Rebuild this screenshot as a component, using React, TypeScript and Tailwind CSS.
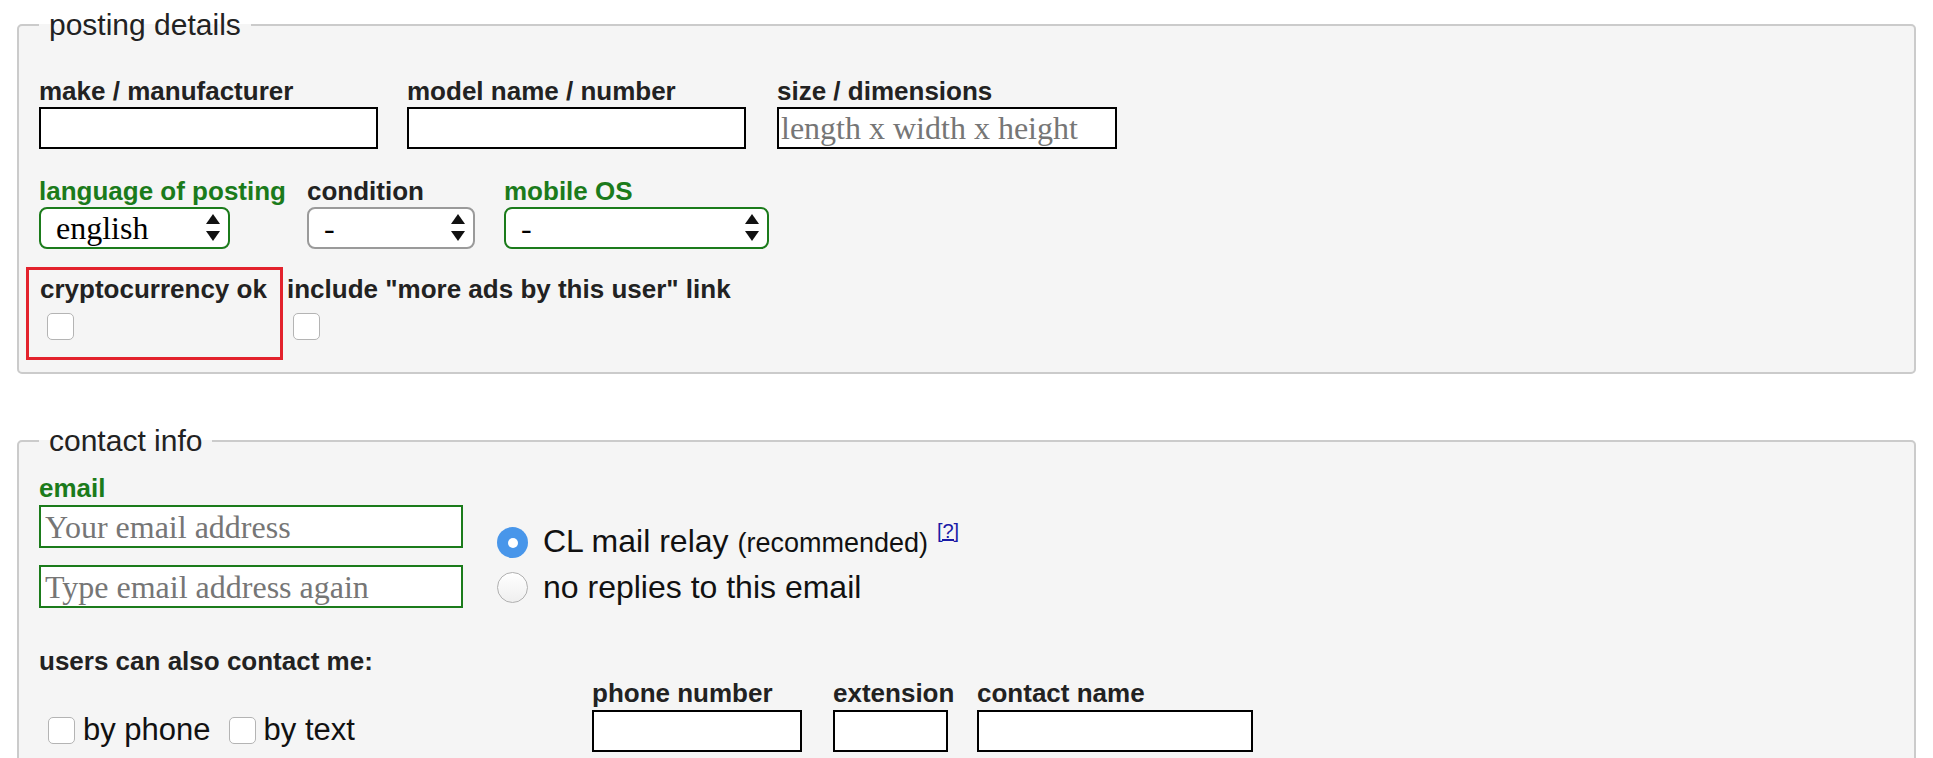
import React from 'react';

function FieldLabel({ children, green = false }: { children: React.ReactNode; green?: boolean }) {
  return (
    <div
      className={`whitespace-nowrap text-[26px] font-bold leading-[30px] ${
        green ? 'text-[#1b7b1b]' : 'text-[#222]'
      }`}
    >
      {children}
    </div>
  );
}

function TextBox({ width, placeholder, green = false }: { width: string; placeholder?: string; green?: boolean }) {
  return (
    <input
      type="text"
      placeholder={placeholder}
      className={`${width} h-[42px] border-2 bg-white px-[2px] font-['Liberation_Serif',serif] text-[32px] text-black outline-none placeholder:text-[#767676] ${
        green ? 'border-[#1b7b1b]' : 'border-black'
      }`}
    />
  );
}

function Arrows() {
  return (
    <svg width="14" height="28" viewBox="0 0 14 28" className="shrink-0">
      <polygon points="7,0 14,10 0,10" fill="#111" />
      <polygon points="0,17 14,17 7,27" fill="#111" />
    </svg>
  );
}

function FakeSelect({ width, value, green = true }: { width: string; value: string; green?: boolean }) {
  return (
    <div
      className={`${width} flex h-[42px] items-center justify-between rounded-[8px] border-2 bg-white pl-[15px] pr-[8px] ${
        green ? 'border-[#1b7b1b]' : 'border-[#9a9a9a]'
      }`}
    >
      <span className="font-['Liberation_Serif',serif] text-[32px] leading-none text-black">{value}</span>
      <Arrows />
    </div>
  );
}

function CheckBox() {
  return <span className="inline-block h-[27px] w-[27px] shrink-0 rounded-[5px] border border-[#b4b4b4] bg-white" />;
}

export default function App() {
  return (
    <div className="min-h-screen bg-white px-[17px] pt-[10px] pb-10 font-['Liberation_Sans',Arial,sans-serif] text-[#222]">
      <fieldset className="rounded-[5px] border-2 border-[#cbcbcb] bg-[#f5f5f5] px-[20px] pt-[36px] pb-[12px]">
        <legend className="px-[10px] text-[30px] leading-[30px] text-[#222]">posting details</legend>

        <div className="flex">
          <div className="flex flex-col">
            <FieldLabel>make / manufacturer</FieldLabel>
            <div className="mt-px">
              <TextBox width="w-[339px]" />
            </div>
          </div>
          <div className="ml-[29px] flex flex-col">
            <FieldLabel>model name / number</FieldLabel>
            <div className="mt-px">
              <TextBox width="w-[339px]" />
            </div>
          </div>
          <div className="ml-[31px] flex flex-col">
            <FieldLabel>size / dimensions</FieldLabel>
            <div className="mt-px">
              <TextBox width="w-[340px]" placeholder="length x width x height" />
            </div>
          </div>
        </div>

        <div className="mt-[27px] flex">
          <div className="flex w-[268px] flex-col">
            <FieldLabel green>language of posting</FieldLabel>
            <div className="mt-px">
              <FakeSelect width="w-[191px]" value="english" />
            </div>
          </div>
          <div className="flex w-[197px] flex-col">
            <FieldLabel>condition</FieldLabel>
            <div className="mt-px">
              <FakeSelect width="w-[168px]" value="-" green={false} />
            </div>
          </div>
          <div className="flex flex-col">
            <FieldLabel green>mobile OS</FieldLabel>
            <div className="mt-px">
              <FakeSelect width="w-[265px]" value="-" />
            </div>
          </div>
        </div>

        <div className="mt-[18px] flex items-start">
          <div className="-ml-[13px] flex w-[257px] flex-col border-[3px] border-[#e3222c] pt-[4px] pb-[17px] pl-[11px]">
            <FieldLabel>cryptocurrency ok</FieldLabel>
            <div className="mt-[9px] ml-[7px] flex">
              <CheckBox />
            </div>
          </div>
          <div className="ml-[4px] flex flex-col pt-[7px]">
            <FieldLabel>include "more ads by this user" link</FieldLabel>
            <div className="mt-[9px] ml-[6px] flex">
              <CheckBox />
            </div>
          </div>
        </div>
      </fieldset>

      <fieldset className="mt-[52px] rounded-[5px] border-2 border-[#cbcbcb] bg-[#f5f5f5] px-[20px] pt-[17px] pb-[40px]">
        <legend className="px-[10px] text-[30px] leading-[30px] text-[#222]">contact info</legend>

        <div className="flex items-start">
          <div className="flex flex-col">
            <FieldLabel green>email</FieldLabel>
            <input
              type="email"
              placeholder="Your email address"
              className="mt-[2px] h-[43px] w-[424px] border-2 border-[#1b7b1b] bg-white px-[4px] font-['Liberation_Serif',serif] text-[32px] outline-none placeholder:text-[#767676]"
            />
            <input
              type="email"
              placeholder="Type email address again"
              className="mt-[17px] h-[43px] w-[424px] border-2 border-[#1b7b1b] bg-white px-[4px] font-['Liberation_Serif',serif] text-[32px] outline-none placeholder:text-[#767676]"
            />
          </div>

          <div className="ml-[34px] mt-[47px] flex flex-col text-[32px] text-[#111]">
            <div className="flex h-[45px] items-center whitespace-nowrap leading-[45px]">
              <span className="flex h-[31px] w-[31px] shrink-0 items-center justify-center rounded-full bg-[#4896ea]">
                <span className="h-[10px] w-[10px] rounded-full bg-white" />
              </span>
              <span className="ml-[15px]">
                CL mail relay <span className="text-[27px]">(recommended)</span>{' '}
                <a href="#" className="align-[14px] text-[20px] leading-none text-[#1a1aa6] underline">
                  [?]
                </a>
              </span>
            </div>
            <div className="flex h-[45px] items-center whitespace-nowrap leading-[45px]">
              <span className="h-[31px] w-[31px] shrink-0 rounded-full border border-[#b0b0b0] bg-gradient-to-b from-white to-[#efefef]" />
              <span className="ml-[15px]">no replies to this email</span>
            </div>
          </div>
        </div>

        <div className="mt-[36px]">
          <FieldLabel>users can also contact me:</FieldLabel>
        </div>

        <div className="mt-[2px] flex items-start">
          <div className="mt-[34px] flex w-[553px] items-center pl-[9px] text-[31px] leading-[36px] text-[#111]">
            <CheckBox />
            <span className="ml-[8px]">by phone</span>
            <span className="ml-[18px] flex items-center">
              <CheckBox />
            </span>
            <span className="ml-[8px]">by text</span>
          </div>

          <div className="flex flex-col">
            <FieldLabel>phone number</FieldLabel>
            <div className="mt-[2px]">
              <TextBox width="w-[210px]" />
            </div>
          </div>
          <div className="ml-[31px] flex w-[115px] flex-col">
            <FieldLabel>extension</FieldLabel>
            <div className="mt-[2px]">
              <TextBox width="w-[115px]" />
            </div>
          </div>
          <div className="ml-[29px] flex flex-col">
            <FieldLabel>contact name</FieldLabel>
            <div className="mt-[2px]">
              <TextBox width="w-[276px]" />
            </div>
          </div>
        </div>
      </fieldset>
    </div>
  );
}
